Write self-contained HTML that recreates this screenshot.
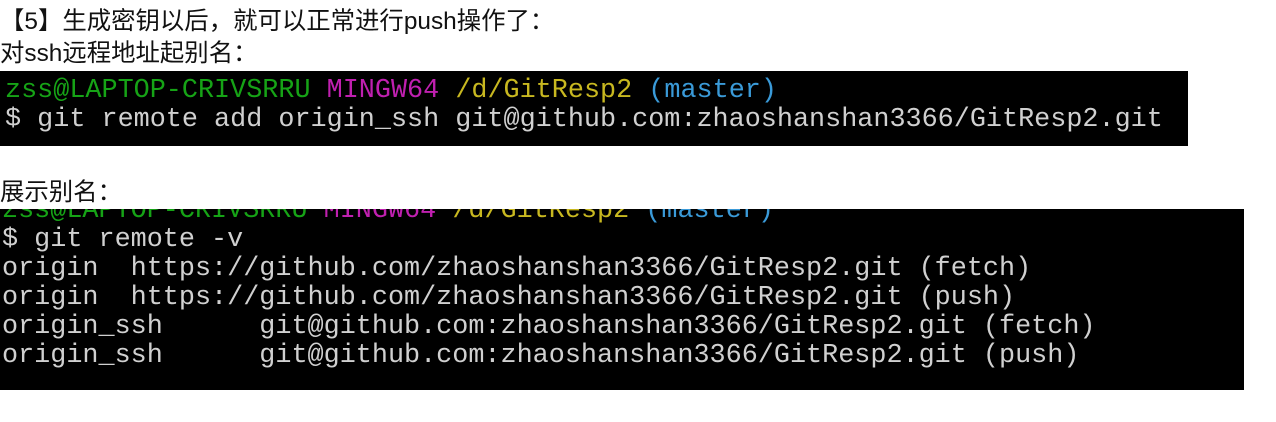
<!DOCTYPE html>
<html><head><meta charset="utf-8"><style>
body{margin:0;width:1276px;height:422px;background:#fff;position:relative;overflow:hidden;font-family:"Liberation Sans","Noto Sans CJK SC",sans-serif;}
.t{position:absolute;left:0;font-size:24.4px;color:#111;line-height:28px;white-space:nowrap}
.box{position:absolute;left:0;background:#000;overflow:hidden}
.m{position:absolute;left:5px;font-family:"Liberation Mono","DejaVu Sans Mono",monospace;font-size:26.8px;line-height:29px;color:#d0d0d0;white-space:pre}
.g{color:#16a316}.p{color:#c020b0}.y{color:#c8b820}.c{color:#3a9ad8}
</style></head><body>
<div class="t" style="top:8px">【5】生成密钥以后，就可以正常进行push操作了：</div>
<div class="t" style="top:40px">对ssh远程地址起别名：</div>
<div class="box" style="top:71px;width:1188px;height:75px">
<div class="m" style="top:6px"><span class="g">zss@LAPTOP-CRIVSRRU</span> <span class="p">MINGW64</span> <span class="y">/d/GitResp2</span> <span class="c">(master)</span>
$ git remote add origin_ssh git@github.com:zhaoshanshan3366/GitResp2.git</div>
</div>
<div class="t" style="top:179px">展示别名：</div>
<div class="box" style="top:209px;width:1244px;height:181px">
<div class="m" style="top:-12px;left:2px"><span class="g">zss@LAPTOP-CRIVSRRU</span> <span class="p">MINGW64</span> <span class="y">/d/GitResp2</span> <span class="c">(master)</span>
$ git remote -v
origin  https://github.com/zhaoshanshan3366/GitResp2.git (fetch)
origin  https://github.com/zhaoshanshan3366/GitResp2.git (push)
origin_ssh      git@github.com:zhaoshanshan3366/GitResp2.git (fetch)
origin_ssh      git@github.com:zhaoshanshan3366/GitResp2.git (push)</div>
</div>
</body></html>
